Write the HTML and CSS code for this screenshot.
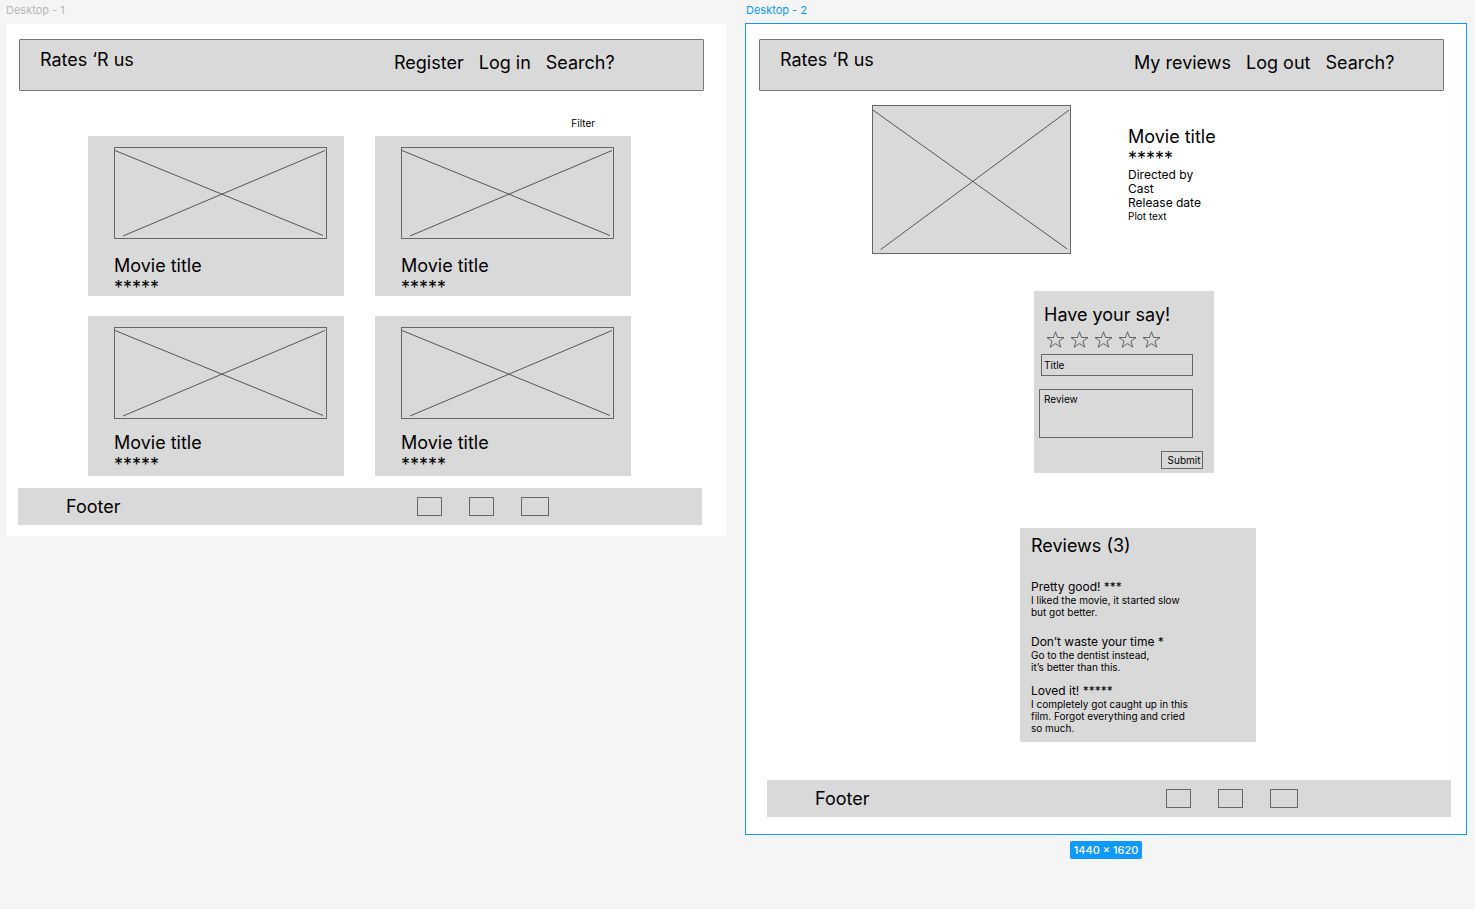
FILE: index.html
```html
<!DOCTYPE html>
<html lang="en">
<head>
<meta charset="utf-8">
<meta name="viewport" content="width=device-width, initial-scale=1">
<title>Rates ‘R us wireframes</title>
<link rel="stylesheet" href="styles.css">
</head>
<body>
<svg class="defs" aria-hidden="true">
  <symbol id="cross" viewBox="0 0 211 90" preserveAspectRatio="none">
    <path d="M0 2.500L208 87.500M210 2.500L8 88" fill="none" stroke="#555" vector-effect="non-scaling-stroke"/>
  </symbol>
  <symbol id="star" viewBox="0 0 19 17">
    <path d="M9.500 .8L11.500 6.500H18L12.900 10.200L14.800 16.200L9.500 12.600L4.200 16.200L6.100 10.200L1 6.500H7.500Z" fill="none" stroke="#333" stroke-width=".7"/>
  </symbol>
</svg>
<main class="canvas">
  <section class="artboard">
    <h2 class="artboard-name">Desktop - 1</h2>
    <div class="frame">
      <header class="site-header">
        <a class="brand" href="#">Rates ‘R us</a>
        <nav class="site-nav"><a href="#">Register</a><a href="#">Log in</a><a href="#">Search?</a></nav>
      </header>
      <div class="toolbar"><button class="filter" type="button">Filter</button></div>
      <div class="cards">
        <article class="card"><svg class="picture"><use href="#cross"/></svg><h3 class="title">Movie title</h3><p class="rating">*****</p></article>
        <article class="card"><svg class="picture"><use href="#cross"/></svg><h3 class="title">Movie title</h3><p class="rating">*****</p></article>
        <article class="card card-tight"><svg class="picture"><use href="#cross"/></svg><h3 class="title">Movie title</h3><p class="rating">*****</p></article>
        <article class="card card-tight"><svg class="picture"><use href="#cross"/></svg><h3 class="title">Movie title</h3><p class="rating">*****</p></article>
      </div>
      <footer class="site-footer">
        <span class="footer-name">Footer</span>
        <div class="socials"><a class="social" href="#" aria-label="Social link 1"></a><a class="social" href="#" aria-label="Social link 2"></a><a class="social social-wide" href="#" aria-label="Social link 3"></a></div>
      </footer>
    </div>
  </section>

  <section class="artboard artboard-selected">
    <h2 class="artboard-name">Desktop - 2</h2>
    <div class="frame">
      <header class="site-header">
        <a class="brand" href="#">Rates ‘R us</a>
        <nav class="site-nav"><a href="#">My reviews</a><a href="#">Log out</a><a href="#">Search?</a></nav>
      </header>
      <div class="movie">
        <svg class="picture poster"><use href="#cross"/></svg>
        <div class="details">
          <h3 class="title">Movie title</h3>
          <p class="rating">*****</p>
          <p class="fact">Directed by</p>
          <p class="fact">Cast</p>
          <p class="fact">Release date</p>
          <p class="small">Plot text</p>
        </div>
      </div>
      <form class="say">
        <h3 class="title">Have your say!</h3>
        <div class="stars" role="radiogroup" aria-label="Rating">
          <label class="star"><input type="radio" name="rating" value="1" aria-label="1 star"><svg><use href="#star"/></svg></label>
          <label class="star"><input type="radio" name="rating" value="2" aria-label="2 stars"><svg><use href="#star"/></svg></label>
          <label class="star"><input type="radio" name="rating" value="3" aria-label="3 stars"><svg><use href="#star"/></svg></label>
          <label class="star"><input type="radio" name="rating" value="4" aria-label="4 stars"><svg><use href="#star"/></svg></label>
          <label class="star"><input type="radio" name="rating" value="5" aria-label="5 stars"><svg><use href="#star"/></svg></label>
        </div>
        <input class="field field-title" type="text" placeholder="Title" aria-label="Title">
        <textarea class="field field-review" placeholder="Review" aria-label="Review"></textarea>
        <button class="submit" type="button">Submit</button>
      </form>
      <section class="reviews">
        <h3 class="title">Reviews (3)</h3>
        <article class="review"><h4>Pretty good! ***</h4><p class="small">I liked the movie, it started slow<br>but got better.</p></article>
        <article class="review"><h4>Don’t waste your time *</h4><p class="small">Go to the dentist instead,<br>it’s better than this.</p></article>
        <article class="review"><h4>Loved it! *****</h4><p class="small">I completely got caught up in this<br>film. Forgot everything and cried<br>so much.</p></article>
      </section>
      <footer class="site-footer">
        <span class="footer-name">Footer</span>
        <div class="socials"><a class="social" href="#" aria-label="Social link 1"></a><a class="social" href="#" aria-label="Social link 2"></a><a class="social social-wide" href="#" aria-label="Social link 3"></a></div>
      </footer>
    </div>
    <p class="size-badge">1440 × 1620</p>
  </section>
</main>
</body>
</html>
```
FILE: styles.css
```css
* { box-sizing: border-box; }

body {
  margin: 0;
  background: #f5f5f5;
  color: #000;
  font-family: Inter, "Liberation Sans", sans-serif;
  font-size: 18px;
  line-height: 22px;
}

h2, h3, h4, p { margin: 0; font-weight: 400; }
h3 { font-size: 18px; }
a { color: inherit; text-decoration: none; }
button, input, textarea { font: inherit; color: inherit; }

.defs { display: none; }

/* Canvas and artboards */
.canvas {
  display: grid;
  grid-template-columns: 720fr 722fr;
  gap: 19px;
  align-items: start;
  padding: 0 8px 0 6px;
}

.artboard { display: flex; flex-direction: column; }
.artboard-name {
  height: 24px;
  padding-top: 2px;
  font-size: 11px;
  line-height: 16px;
  color: #b8b8b8;
}
.frame { background: #fff; padding: 15px 0 11px; }

.artboard-selected .artboard-name { height: 23px; padding-left: 1px; color: #0d99ff; }
.artboard-selected .frame { border: 1px solid #0d99ff; padding-bottom: 17px; }

.size-badge {
  align-self: center;
  margin-top: 6px;
  padding: 0 4px;
  border-radius: 2px;
  background: #0d99ff;
  color: #fff;
  font-size: 11px;
  font-weight: 500;
  line-height: 18px;
}

/* Header and footer */
.site-header {
  display: flex;
  justify-content: space-between;
  margin: 0 22px 0 13px;
  height: 52px;
  padding: 9px 0 0 20px;
  background: #d9d9d9;
  border: 1px solid #777;
  border-radius: 1px;
}
.site-nav {
  display: flex;
  gap: 15px;
  flex: 0 0 309px;
  padding-top: 3px;
  white-space: nowrap;
}

.site-footer {
  display: flex;
  justify-content: space-between;
  align-items: center;
  height: 37px;
  margin: 12px 24px 0 12px;
  padding-left: 48px;
  background: #d9d9d9;
}
.artboard-selected .site-footer { margin: 38px 15px 0 21px; }
.socials { display: flex; gap: 27px; flex: 0 0 285px; }
.social { width: 25px; height: 19px; border: 1px solid #666; }
.social-wide { width: 28px; }

/* Shared pieces */
.picture { display: block; border: 1px solid #666; }
.fact { font-size: 12px; line-height: 14px; }
.small { font-size: 10px; line-height: 12px; }

/* Movie list */
.toolbar {
  display: flex;
  justify-content: flex-end;
  padding: 26px 131px 0 0;
}
.filter {
  padding: 0;
  border: 0;
  background: none;
  font-size: 10px;
  line-height: 12px;
}
.cards {
  display: grid;
  grid-template-columns: 1fr 1fr;
  gap: 20px 31px;
  padding: 7px 95px 0 82px;
}
.card {
  height: 160px;
  padding: 11px 17px 0 26px;
  background: #d9d9d9;
}
.card .picture { width: 100%; height: 92px; margin-bottom: 16px; }
.card-tight .picture { margin-bottom: 13px; }

/* Movie page */
.movie {
  display: flex;
  gap: 57px;
  padding: 14px 0 0 126px;
}
.poster { width: 199px; height: 149px; background: #d9d9d9; }
.details { padding-top: 21px; }
.details .rating { height: 20px; }

.say {
  display: flex;
  flex-direction: column;
  width: 180px;
  height: 182px;
  margin: 37px 0 0 288px;
  padding: 13px 11px 0 5px;
  background: #d9d9d9;
}
.say .title { padding-left: 5px; }
.stars { display: flex; gap: 5px; padding: 5px 0 0 7px; }
.star { display: flex; }
.star input { appearance: none; width: 0; height: 0; margin: 0; }
.star svg { width: 19px; height: 17px; }
.field {
  width: 154px;
  border: 1px solid #666;
  border-radius: 0;
  background: none;
  font-size: 10px;
  line-height: 12px;
}
.field::placeholder { color: #000; opacity: 1; }
.field-title { width: 152px; height: 22px; margin: 6px 0 0 2px; padding: 0 2px; }
.field-review { height: 49px; margin-top: 13px; padding: 3px 4px; resize: none; }
.submit {
  align-self: flex-end;
  width: 42px;
  height: 18px;
  margin-top: 13px;
  padding: 0 1px 0 5px;
  border: 1px solid #666;
  background: none;
  font-size: 10px;
  line-height: 12px;
}

.reviews {
  display: flex;
  flex-direction: column;
  width: 236px;
  height: 214px;
  margin: 55px 0 0 274px;
  padding: 7px 11px 0;
  background: #d9d9d9;
}
.reviews .title { margin-bottom: 23px; }
.review { margin-bottom: 11px; }
.review h4 { font-size: 12px; line-height: 14px; }
.review:nth-of-type(1) { margin-bottom: 17px; }
```
